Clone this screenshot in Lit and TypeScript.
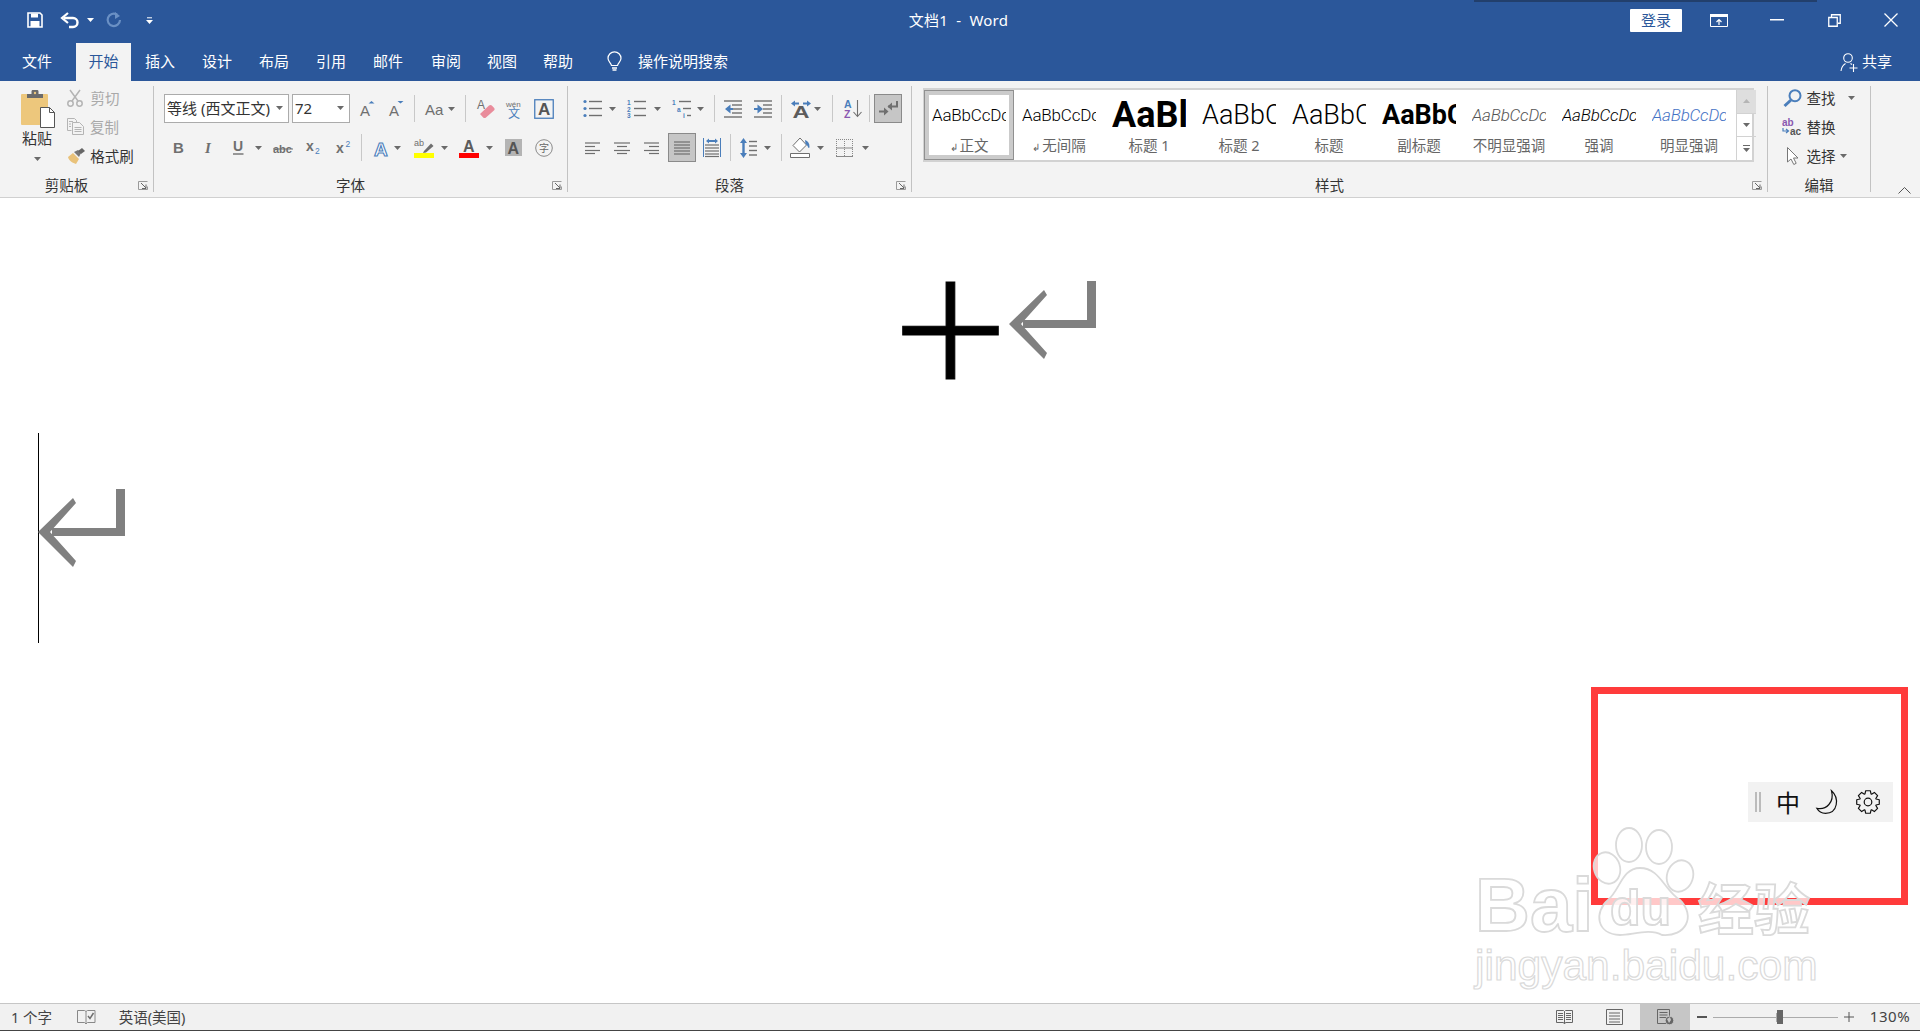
import { LitElement, html, css, svg } from "lit";
import { customElement } from "lit/decorators.js";

const G = "#6f6f6f";
const B = "#4a7ebb";
const CJK = '"Noto Sans CJK SC","Noto Sans",sans-serif';
const SANS = '"Liberation Sans",sans-serif';

const ic = (w: number, h: number, body: unknown) =>
  html`<svg width=${w} height=${h} viewBox="0 0 ${w} ${h}" fill="none">${body}</svg>`;

const t = (x: number, y: number, size: number, fill: string, s: string, weight = "700", family = SANS, italic = false) =>
  svg`<text x=${x} y=${y} font-size=${size} fill=${fill} font-weight=${weight} font-family=${family} font-style=${italic ? "italic" : "normal"}>${s}</text>`;

const lines = (x: number, w: number, ys: number[], c = G, sw = 1.4) =>
  ys.map((y) => svg`<path d="M${x} ${y}h${w}" stroke=${c} stroke-width=${sw}/>`);

type Item = [number, number, unknown];
const row = (origin: number, items: Item[], cls = "") => {
  let cur = origin;
  return html`<div class="row ${cls}">
    ${items.map(([x, w, c]) => {
      const m = x - cur;
      cur = x + w;
      return html`<span class="slot" style="margin-left:${m}px;width:${w}px">${c}</span>`;
    })}
  </div>`;
};

const caret = (c = "#6a6a6a") => ic(7, 4, svg`<path d="M0 0h7L3.5 4z" fill=${c}/>`);
const sep = html`<i class="sep"></i>`;
const launcher = ic(
  10,
  9,
  svg`<path d="M.5 8.5v-8h9" stroke="#9a9a9a"/><path d="M3 2l5 5M8 3.5V7.5H4" stroke="#666"/><path d="M.5 8.5h9v-3" stroke="#9a9a9a"/>`
);

/* ---- quick access & window icons ---- */
const save = ic(
  16,
  16,
  svg`<path d="M1 1h12l2 2v12H1z" stroke="#fff" stroke-width="1.6"/><path d="M4 1.5h7v4H4z" fill="#fff"/><path d="M3.5 9h9v6h-9z" fill="#fff"/>`
);
const undo = ic(
  19,
  15,
  svg`<path d="M3 5h9a4.5 4.5 0 0 1 0 9H8" stroke="#fff" stroke-width="2.4"/><path d="M7 0L1 5l6 5" stroke="#fff" stroke-width="2.2"/>`
);
const redo = ic(
  16,
  16,
  svg`<path d="M11 2.5A6.2 6.2 0 1 0 14 8" stroke="#6a90c4" stroke-width="2.2"/><path d="M9 0v7l5-3z" fill="#6a90c4"/>`
);
const qatMore = ic(7, 7, svg`<path d="M1 .8h5" stroke="#fff"/><path d="M0 3h7L3.5 7z" fill="#fff"/>`);
const bulb = ic(
  15,
  20,
  svg`<path d="M4.5 13.5C3.5 10.5 1 9.5 1 6.3a6.5 6.5 0 0 1 13 0c0 3.2-2.5 4.2-3.5 7.2z" stroke="#fff" stroke-width="1.2"/><path d="M5 16h5M5.5 18h4" stroke="#fff" stroke-width="1.4"/>`
);
const ribbonOpt = ic(
  18,
  13,
  svg`<path d="M.5.5h17v12H.5z" stroke="#fff"/><path d="M0 0h18v3H0z" fill="#fff"/><path d="M9 11V5.5M6.5 8L9 5.5 11.5 8" stroke="#fff" stroke-width="1.2"/>`
);
const minimize = ic(14, 2, svg`<path d="M0 0h14v1.5H0z" fill="#fff"/>`);
const restore = ic(
  13,
  13,
  svg`<path d="M.75 3.5h8.5v8.75H.75z" stroke="#fff" stroke-width="1.3"/><path d="M3.5 3V.75h8.75v8.5H10" stroke="#fff" stroke-width="1.3"/>`
);
const closeX = ic(14, 14, svg`<path d="M.5.5l13 13M13.5.5l-13 13" stroke="#fff" stroke-width="1.3"/>`);
const share = ic(
  18,
  19,
  svg`<circle cx="8" cy="5" r="4.3" stroke="#fff" stroke-width="1.1"/><path d="M1 18c.5-4 2-6 4.5-7.5M10.5 10.5l1.5 1M9.5 15h8M13.5 11v8" stroke="#fff" stroke-width="1.1"/>`
);

/* ---- clipboard ---- */
const paste = ic(
  34,
  38,
  svg`<rect x="0" y="4" width="27" height="31" rx="1" fill="#edc77c"/>
  <path d="M6 4h4.5V1.5C10.5.5 11 0 12 0h4c1 0 1.5.5 1.5 1.5V4H22v4H6z" fill="#6b6b6b"/>
  <circle cx="14" cy="3" r="1.2" fill="#edc77c"/>
  <path d="M19.5 17.5h9l5 5v15h-14z" fill="#fff" stroke="#555"/><path d="M28.5 17.5v5h5" stroke="#555"/>`
);
const cut = ic(
  16,
  18,
  svg`<g stroke="#b4b4b4" stroke-width="1.5"><circle cx="3.5" cy="14.5" r="2.7"/><circle cx="12.5" cy="14.5" r="2.7"/><path d="M5 12L13 1M11 12L3 1"/></g>`
);
const copy = ic(
  17,
  17,
  svg`<g stroke="#b4b4b4"><path d="M.5.5h7l2 2v3M.5.5v12h4"/><path d="M5.5 4.5h7l4 4v8h-11z" fill="#f3f3f3"/><path d="M7.5 9.5h7M7.5 11.5h7M7.5 13.5h7M2 3.5h4M2 6h2M2 8.5h2"/></g>`
);
const painter = ic(
  17,
  16,
  svg`<path d="M0 9l5-4 6 6-3 5C5 15 1 13 0 9z" fill="#e9c27a"/><path d="M6 4l4-2 3 3-2 4z" fill="#777"/><path d="M10 3l4-3 3 3-4 3z" fill="#666"/>`
);

/* ---- font ---- */
const grow = ic(
  15,
  16,
  svg`${t(0, 15, 15, G, "A", "400")}<path d="M8.5 2.5L11.5 0l3 2.5z" fill=${B}/>`
);
const shrink = ic(
  15,
  16,
  svg`${t(0, 15, 15, G, "A", "400")}<path d="M8.5 0h6l-3 2.5z" fill=${B}/>`
);
const aa = ic(18, 14, t(0, 13, 15, G, "Aa", "400"));
const eraser = ic(
  18,
  20,
  svg`${t(0, 10, 12, G, "A", "400")}<path d="M3 15L12 6.5c1-.8 2-.8 2.8 0l2.4 2.4c.6.8.6 1.8-.3 2.6L9 18.5c-.9.8-2 .8-2.8 0L3 15z" fill="#e98c9b"/>`
);
const phonetic = ic(
  16,
  18,
  svg`${t(0, 6.5, 8, G, "wén", "400")}${t(2, 17.5, 12, B, "文", "400", CJK)}`
);
const charBorder = ic(
  20,
  20,
  svg`<rect x=".75" y=".75" width="18.5" height="18.5" stroke=${B} stroke-width="1.3"/>${t(4, 16, 17, "#555", "A")}`
);
const boldI = ic(10, 13, t(0, 12, 15, G, "B"));
const italicI = ic(10, 13, t(1, 12, 15, G, "I", "700", '"Liberation Serif",serif', true));
const under = ic(
  11,
  15,
  svg`${t(0, 11, 14, G, "U")}<path d="M0 14h10.5" stroke=${G} stroke-width="1.4"/>`
);
const abc = ic(20, 12, svg`${t(0, 11, 11, G, "abc")}<path d="M0 7h20" stroke=${G}/>`);
const sub = ic(
  15,
  15,
  svg`${t(0, 11, 14, G, "x")}${t(9, 14, 8.5, B, "2", "400")}`
);
const sup = ic(
  15,
  15,
  svg`${t(0, 13, 14, G, "x")}${t(9.5, 7, 8.5, B, "2", "400")}`
);
const effect = ic(
  16,
  18,
  svg`<text x="1" y="16.5" font-size="19" font-weight="700" font-family=${SANS} fill="#fff" stroke=${B} stroke-width="1.1">A</text>`
);
const hilite = ic(
  20,
  20,
  svg`${t(0, 8, 9, G, "ab", "400")}<path d="M10 13L17 5.5l2.5 2.5L12 14.5l-3 .5z" fill=${G}/><path d="M0 15h20v5H0z" fill="#ffff00"/>`
);
const fontColor = ic(
  20,
  20,
  svg`${t(4, 13.5, 16, "#5c5c5c", "A")}<path d="M0 15h20v5H0z" fill="#ff0000"/>`
);
const shadeA = ic(
  17,
  17,
  svg`<path d="M0 0h17v17H0z" fill="#b4b4b4"/>${t(2.5, 15, 16, "#555", "A")}`
);
const circled = ic(
  18,
  18,
  svg`<circle cx="9" cy="9" r="8.3" stroke="#8a8a8a"/>${t(4, 13, 10, "#666", "字", "400", CJK)}`
);

/* ---- paragraph ---- */
const bullets = ic(
  19,
  19,
  svg`<g fill=${B}><circle cx="2" cy="2.5" r="1.6"/><circle cx="2" cy="9.5" r="1.6"/><circle cx="2" cy="16.5" r="1.6"/></g>${lines(6, 13, [2.5, 9.5, 16.5])}`
);
const numbers = ic(
  19,
  19,
  svg`${t(0, 5.5, 6.5, B, "1")}${t(0, 12.5, 6.5, B, "2")}${t(0, 19, 6.5, B, "3")}${lines(7, 12, [2.5, 9.5, 16.5])}`
);
const multi = ic(
  19,
  19,
  svg`${t(0, 5.5, 6.5, B, "1")}${t(5, 12.5, 6.5, B, "a")}${t(11, 19, 6.5, B, "i")}${lines(7, 12, [2.5])}${lines(11, 8, [9.5])}${lines(15, 4, [16.5])}`
);
const outdent = ic(
  18,
  18,
  svg`${lines(0, 18, [1, 17])}${lines(8, 10, [5, 9, 13])}<path d="M1 9l5.5-4.5V8H9v2H6.5v3.5z" fill=${B}/>`
);
const indent = ic(
  18,
  18,
  svg`${lines(0, 18, [1, 17])}${lines(9, 9, [5, 9, 13])}<path d="M9 9L3.5 4.5V8H0v2h3.5v3.5z" fill=${B}/>`
);
const direction = ic(
  20,
  18,
  svg`<text x="1.5" y="18" font-size="16" font-weight="700" font-family=${SANS} fill="#5c5c5c" textLength="17" lengthAdjust="spacingAndGlyphs">A</text><path d="M0 3.5l4-3v2h4v2H4v2zM20 3.5l-4-3v2h-4v2h4v2z" fill=${B}/>`
);
const sort = ic(
  18,
  19,
  svg`${t(0, 9, 10.5, B, "A")}${t(0, 19, 10.5, "#8a58b0", "Z")}<path d="M13.5 1v16M9.5 13l4 4.5 4-4.5" stroke=${G} stroke-width="1.1"/>`
);
const pilcrow = ic(
  20,
  17,
  svg`<path d="M19 1v5.5H10" stroke=${G} stroke-width="2"/><path d="M14 2.5L9.5 6.5l4.5 4z" fill=${G}/><path d="M1 11.5h8" stroke=${G} stroke-width="2"/><path d="M6 7.5l4.5 4-4.5 4z" fill=${G}/>`
);
const alignL = ic(15, 12, lines(0, 15, [1, 8.5], G, 1.2).concat(lines(0, 10, [4.5, 11.5], G, 1.2)));
const alignC = ic(16, 12, lines(0, 16, [1, 8.5], G, 1.2).concat(lines(3, 10, [4.5, 11.5], G, 1.2)));
const alignR = ic(15, 12, lines(0, 15, [1, 8.5], G, 1.2).concat(lines(5, 10, [4.5, 11.5], G, 1.2)));
const justify = ic(16, 14, lines(0, 16, [1, 4, 7, 10, 13], G, 1.2));
const distribute = ic(
  18,
  19,
  svg`<path d="M.5 0v19M17.5 0v19" stroke=${B}/>${lines(2, 14, [7, 10, 13, 16, 18.5], G, 1.2)}<path d="M3 3l3-2.5V2h6V.5L15 3l-3 2.5V4H6v1.5z" fill=${B}/>`
);
const spacing = ic(
  17,
  20,
  svg`<path d="M3.5 0L7 5H4.7v10H7L3.5 20 0 15h2.3V5H0z" fill=${B}/>${lines(9, 8, [3.5, 8, 12.5, 17])}`
);
const bucket = ic(
  20,
  20,
  svg`<path d="M10 0l6.5 7-7 7L3 7.5z" fill="#fff" stroke=${G}/><path d="M15 2c3 1 4.5 3 4.5 7 0 1-1 1.5-1.5 0-.3-1-1-2-2.5-3z" fill=${B}/><path d="M.5 15.5h19v4H.5z" fill="#fff" stroke=${G}/>`
);
const borders = ic(
  17,
  18,
  svg`<g stroke="#888" stroke-dasharray="1 1"><path d="M.5 0v18M16.5 0v18M0 .5h17M8.5 0v18"/></g><path d="M0 9h17M0 17.5h17" stroke="#888"/>`
);

/* ---- editing ---- */
const find = ic(
  19,
  18,
  svg`<circle cx="12" cy="6.7" r="5.5" stroke=${B} stroke-width="2"/><path d="M8 11L1.5 17" stroke=${B} stroke-width="3"/>`
);
const replace = ic(
  20,
  17,
  svg`${t(0, 8, 10, "#8a58b0", "ab", "700")}${t(8, 16.5, 10, "#555", "ac", "700")}<path d="M1 10v3h5M4 11l2.5 2L4 15" stroke=${B} stroke-width="1.2"/>`
);
const pointer = ic(
  12,
  18,
  svg`<path d="M.5.5v14.5l3.5-3 2.8 5.5 2.4-1.2-2.7-5.3h4.500z" fill="#fff" stroke="#777"/>`
);

/* ---- status bar ---- */
const proof = ic(
  18,
  15,
  svg`<path d="M.5.5h7l1.5 1 1.5-1h7.5v12h-7.5l-1.5 1.5-1.5-1.5h-7zM9 1.5v12" stroke="#888"/><path d="M11 6l2 2.5L16.5 3" stroke=${G} stroke-width="1.5"/>`
);
const readMode = ic(
  17,
  15,
  svg`<path d="M.5.5h7l1 1 1-1h7v12h-7l-1 1.5-1-1.5h-7zM8.500 1.5v12" stroke="#666"/>${lines(2, 5, [3.5, 5.5, 7.5, 9.5], "#666", 1)}${lines(10, 5, [3.5, 5.5, 7.5, 9.5], "#666", 1)}`
);
const printMode = ic(
  17,
  16,
  svg`<path d="M.5.5h16v15H.5z" stroke="#666"/>${lines(3, 11, [4, 7, 10, 13], "#666", 1)}`
);
const webMode = ic(
  17,
  16,
  svg`<path d="M.5.5h12v14H.5z" stroke="#666"/>${lines(2.5, 8, [3.5, 6, 8.5], "#666", 1)}<circle cx="12.5" cy="11.5" r="4.3" fill="#666" stroke="#c6c6c6"/><path d="M10 10l3-2 1 3-2 3z" fill="#c6c6c6"/>`
);

/* ---- overlay gear ---- */
const gearPath = (() => {
  const n = 8;
  const cx = 12;
  const cy = 12;
  let d = "";
  for (let i = 0; i < n; i++) {
    const a = (i * 2 * Math.PI) / n;
    const p = (da: number, r: number) =>
      `${(cx + r * Math.cos(a + da)).toFixed(2)} ${(cy + r * Math.sin(a + da)).toFixed(2)}`;
    d += `${i === 0 ? "M" : "L"}${p(-0.36, 8.6)} L${p(-0.2, 11.5)} L${p(0.2, 11.5)} L${p(0.36, 8.6)} `;
  }
  return d + "Z";
})();
const gear = ic(
  24,
  24,
  svg`<path d=${gearPath} stroke="#111" stroke-width="1.2" stroke-linejoin="round"/><circle cx="12" cy="12" r="3.8" stroke="#111" stroke-width="1.2"/>`
);
const moon = ic(
  24,
  24,
  svg`<path d="M15.5.8C23.5 8 22 23.3 9.5 23.3 5.5 23.3 2.5 21.3.8 18.3 10.5 20.3 18.5 12 15.5.8z" stroke="#111" stroke-width="1.2"/>`
);

const returnMark = ic(
  87,
  78,
  svg`<path d="M78 0h9v47H14V39H78z" fill="#808080"/><path d="M35 9L38 14 12 43 38 72 35 78 0 43z" fill="#808080"/>`
);

const styleItems: { s: string; label: string; cls: string; mark?: boolean; sel?: boolean }[] = [
  { s: "AaBbCcDc", label: "正文", cls: "base", mark: true, sel: true },
  { s: "AaBbCcDc", label: "无间隔", cls: "base", mark: true },
  { s: "AaBl", label: "标题 1", cls: "h1" },
  { s: "AaBbC", label: "标题 2", cls: "h2" },
  { s: "AaBbC", label: "标题", cls: "h2" },
  { s: "AaBbC", label: "副标题", cls: "h2 b" },
  { s: "AaBbCcDc", label: "不明显强调", cls: "base i gray" },
  { s: "AaBbCcDc", label: "强调", cls: "base i" },
  { s: "AaBbCcDc", label: "明显强调", cls: "base i blue" },
];

@customElement("app-root")
export class AppRoot extends LitElement {
  static styles = css`
    :host {
      display: block;
      font-family: "Noto Sans", "Noto Sans CJK SC", sans-serif;
      color: #333;
    }
    .page {
      position: relative;
      width: 1920px;
      height: 1031px;
      overflow: hidden;
      display: flex;
      flex-direction: column;
      background: #fff;
    }
    svg {
      display: block;
      flex: none;
      overflow: visible;
    }
    .row {
      display: flex;
      align-items: center;
    }
    .slot {
      flex: none;
      display: flex;
      align-items: center;
      justify-content: center;
      white-space: nowrap;
    }
    .sep {
      display: block;
      width: 1px;
      height: 27px;
      background: #c8c8c8;
    }
    .title {
      height: 43px;
      background: #2b579a;
      color: #fff;
      position: relative;
    }
    .title .row {
      height: 40px;
    }
    .title-text {
      font-size: 15px;
      white-space: pre;
      color: #fff;
      letter-spacing: 0.2px;
      padding-bottom: 2px;
    }
    .login {
      display: flex;
      align-items: center;
      justify-content: center;
      width: 52px;
      height: 23px;
      box-sizing: border-box;
      padding-bottom: 2px;
      background: #fff;
      border-radius: 1px;
      color: #2b579a;
      font-size: 15px;
    }
    .shadow {
      position: absolute;
      left: 1474px;
      top: 0;
      width: 343px;
      height: 2px;
      background: #223f6c;
      filter: blur(0.6px);
    }
    .tabs {
      height: 38px;
      background: #2b579a;
    }
    .tabs .row {
      height: 38px;
      align-items: stretch;
    }
    .tab {
      font-size: 15px;
      color: #fff;
      display: flex;
      align-items: center;
      justify-content: center;
      width: 100%;
      padding-bottom: 3px;
      box-sizing: border-box;
    }
    .tabs .slot {
      align-items: stretch;
    }
    .tabs .slot svg {
      align-self: center;
    }
    .tab.on {
      background: #f3f3f3;
      color: #2b579a;
    }
    .tab.search {
      justify-content: flex-start;
    }
    .ribbon {
      height: 111px;
      background: #f3f3f3;
      border-bottom: 1px solid #d0d0d0;
      display: flex;
      padding-top: 5px;
      box-sizing: content-box;
    }
    .collapse {
      align-self: flex-end;
      padding-bottom: 3px;
    }
    .group {
      flex: none;
      height: 106px;
      box-sizing: border-box;
      border-right: 1px solid #c2c2c2;
      display: flex;
      flex-direction: column;
      font-size: 14.5px;
    }
    .g1 {
      width: 154px;
    }
    .g2 {
      width: 414px;
    }
    .g3 {
      width: 344px;
    }
    .g4 {
      width: 856px;
    }
    .g5 {
      width: 103px;
    }
    .rows {
      flex: none;
      height: 92px;
      padding-top: 8px;
      box-sizing: border-box;
      display: flex;
      flex-direction: column;
      gap: 10px;
    }
    .rows.flat {
      padding-top: 0;
    }
    .rows .row {
      height: 29px;
    }
    .glabel {
      flex: 1;
      display: flex;
      align-items: center;
      font-size: 14.5px;
      line-height: 14px;
      color: #333;
    }
    .glabel b {
      flex: 1;
      font-weight: 400;
      text-align: center;
    }
    .glabel i {
      flex: none;
      width: 20px;
      display: flex;
      justify-content: center;
      padding-top: 1px;
      box-sizing: border-box;
    }
    .combo {
      width: 100%;
      height: 29px;
      box-sizing: border-box;
      background: #fff;
      border: 1px solid #ababab;
      display: flex;
      align-items: center;
      padding: 0 5px 2px 2px;
      font-size: 15px;
      color: #333;
      justify-content: space-between;
    }
    .on-box {
      width: 100%;
      height: 29px;
      box-sizing: border-box;
      background: #c6c6c6;
      border: 1.5px solid #8a8a8a;
      display: flex;
      align-items: center;
      justify-content: center;
    }
    .clip {
      flex: none;
      height: 92px;
      display: flex;
    }
    .paste {
      flex: none;
      width: 67px;
      padding: 4px 0 0 21px;
      box-sizing: border-box;
      display: flex;
      flex-direction: column;
      align-items: flex-start;
    }
    .paste-inner {
      width: 32px;
      display: flex;
      flex-direction: column;
      align-items: center;
    }
    .paste-icon {
      display: flex;
      width: 34px;
      margin-left: 2px;
    }
    .paste-text {
      font-size: 15px;
      line-height: 20px;
      white-space: nowrap;
    }
    .paste-caret {
      margin-top: 9px;
    }
    .stack {
      flex: none;
      display: flex;
      flex-direction: column;
      margin-top: -3px;
    }
    .stack .row {
      height: 29px;
    }
    .dim {
      color: #a9a9a9;
    }
    .gallery {
      margin: 2px 0 0 11px;
      width: 831px;
      height: 74px;
      box-sizing: border-box;
      border: 2px solid #d2d2d2;
      background: #fff;
      display: flex;
    }
    .items {
      display: grid;
      grid-template-columns: repeat(9, 90px);
      flex: none;
      margin-left: -1px;
      width: 810px;
    }
    .item {
      height: 70px;
      box-sizing: border-box;
      padding-top: 3px;
      display: flex;
      flex-direction: column;
      align-items: center;
    }
    .item.sel {
      box-shadow: inset 0 0 0 1px #909090, inset 0 0 0 5px #cbcbcb;
    }
    .sample {
      height: 44px;
      width: 74px;
      display: flex;
      align-items: center;
      white-space: nowrap;
      overflow: hidden;
      font-family: "Roboto", "Liberation Sans", sans-serif;
      font-weight: 300;
      color: #000;
    }
    .sample.base {
      font-size: 17px;
      letter-spacing: -0.2px;
    }
    .sample.h1 {
      font-size: 36px;
      font-weight: 700;
    }
    .sample.h2 {
      font-size: 27px;
    }
    .sample.b {
      font-weight: 700;
    }
    .sample.i {
      font-style: italic;
    }
    .sample.gray {
      color: #555;
    }
    .sample.blue {
      color: #4472c4;
    }
    .slabel {
      font-size: 14.5px;
      line-height: 16px;
      color: #666;
      white-space: nowrap;
    }
    .slabel span {
      font-size: 10px;
      margin-right: 2px;
    }
    .scroll {
      flex: none;
      width: 19px;
      display: flex;
      flex-direction: column;
      margin-left: 2px;
      border-left: 1px solid #d2d2d2;
    }
    .scroll span {
      flex: 1;
      display: flex;
      align-items: center;
      justify-content: center;
      border-bottom: 1px solid #d2d2d2;
    }
    .scroll span.top {
      background: #dedede;
    }
    .scroll span:last-child {
      border-bottom: none;
    }
    .doc {
      flex: 1;
      display: flex;
      flex-direction: column;
      align-items: flex-start;
    }
    .line1 {
      margin-top: 83px;
      padding-left: 903px;
      height: 98px;
      display: flex;
      gap: 11px;
    }
    .plus {
      width: 95px;
      height: 98px;
      box-sizing: border-box;
      padding-bottom: 12px;
      display: flex;
      align-items: center;
      justify-content: center;
      font-family: "Open Sans", sans-serif;
      font-weight: 300;
      font-size: 206px;
      line-height: 86px;
      color: #000;
      -webkit-text-stroke: 1px #000;
    }
    .line2 {
      margin: 54px 0 0 38px;
      height: 210px;
      border-left: 1px solid #000;
      padding-top: 56px;
      box-sizing: border-box;
    }
    .line2 svg {
      margin-left: -1px;
    }
    .status {
      height: 28px;
      box-sizing: border-box;
      background: #f1f1f1;
      border-top: 1px solid #c6c6c6;
      border-bottom: 1px solid #444;
      font-size: 14.5px;
      color: #444;
    }
    .status .row {
      height: 26px;
      align-items: stretch;
    }
    .status .text {
      padding-bottom: 2px;
      white-space: nowrap;
    }
    .hl {
      width: 100%;
      height: 100%;
      background: #c6c6c6;
      display: flex;
      align-items: center;
      justify-content: center;
    }
    .track {
      width: 100%;
      height: 1px;
      background: #ababab;
    }
    .minus {
      width: 100%;
      height: 1.5px;
      background: #555;
    }
    .thumb {
      width: 6px;
      height: 14px;
      background: #666;
    }
    .tick {
      width: 1px;
      height: 9px;
      background: #ababab;
    }
    .pct {
      font-size: 15px;
      letter-spacing: 0.6px;
      color: #444;
      padding-bottom: 2px;
    }
    .redbox {
      position: absolute;
      left: 1591px;
      top: 687px;
      width: 317px;
      height: 218px;
      box-sizing: border-box;
      border: 7px solid #ff3b3b;
    }
    .ime {
      position: absolute;
      left: 1748px;
      top: 782px;
      width: 145px;
      height: 40px;
      background: #f2f2f2;
    }
    .ime .row {
      height: 40px;
    }
    .grip {
      width: 6px;
      height: 20px;
      box-sizing: border-box;
      border-left: 2px solid #bbb;
      border-right: 2px solid #bbb;
    }
    .zh {
      font-family: "Noto Sans CJK SC", sans-serif;
      font-size: 24px;
      color: #111;
      line-height: 30px;
    }
    .wm {
      position: absolute;
      color: rgba(255, 255, 255, 0.72);
      -webkit-text-stroke: 1.8px #dadada;
      white-space: nowrap;
      pointer-events: none;
    }
    .wm1 {
      left: 1475px;
      top: 861px;
      font: 700 76px/88px "Liberation Sans", sans-serif;
    }
    .wm2 {
      left: 1610px;
      top: 879px;
      font: 700 50px/58px "Liberation Sans", sans-serif;
    }
    .wm3 {
      left: 1698px;
      top: 866px;
      font: 700 56px/80px "Noto Sans CJK SC", sans-serif;
    }
    .wm4 {
      left: 1475px;
      top: 941px;
      font: 400 42.5px/50px "Liberation Sans", sans-serif;
      -webkit-text-stroke: 1.2px #dadada;
    }
    .paw {
      position: absolute;
      left: 1590px;
      top: 830px;
      pointer-events: none;
    }
  `;

  private tabs: [string, number, number][] = [
    ["文件", 22, 30],
    ["开始", 76, 55],
    ["插入", 145, 30],
    ["设计", 202, 30],
    ["布局", 259, 30],
    ["引用", 316, 30],
    ["邮件", 373, 30],
    ["审阅", 431, 30],
    ["视图", 487, 30],
    ["帮助", 543, 30],
  ];

  render() {
    const tabItems: Item[] = this.tabs.map(([s, x, w]) => [
      x,
      w,
      html`<span class="tab ${s === "开始" ? "on" : ""}">${s}</span>`,
    ]);
    return html`
      <div class="page">
        <div class="title">
          ${row(0, [
            [27, 16, save],
            [61, 19, undo],
            [87, 7, caret("#fff")],
            [106, 16, redo],
            [146, 7, qatMore],
            [908, 101, html`<span class="title-text">文档1  -  Word</span>`],
            [1630, 52, html`<span class="login">登录</span>`],
            [1710, 18, ribbonOpt],
            [1770, 14, minimize],
            [1828, 13, restore],
            [1884, 14, closeX],
          ])}
          <div class="shadow"></div>
        </div>
        <div class="tabs">
          ${row(0, [
            ...tabItems,
            [607, 15, bulb],
            [638, 90, html`<span class="tab search">操作说明搜索</span>`],
            [1840, 18, share],
            [1862, 30, html`<span class="tab">共享</span>`],
          ])}
        </div>
        <div class="ribbon">
          ${this.clipboard()} ${this.font()} ${this.para()} ${this.styles_()} ${this.editing()}
          ${row(0, [[27, 13, ic(13, 7, svg`<path d="M.5 6.5L6.5.5l6 6" stroke="#555"/>`)]], "collapse")}
        </div>
        <div class="doc">
          <div class="line1"><span class="plus">+</span>${returnMark}</div>
          <div class="line2">${returnMark}</div>
        </div>
        <div class="status">
          ${row(0, [
            [11, 41, html`<span class="text">1 个字</span>`],
            [77, 18, proof],
            [117, 70, html`<span class="text">英语(美国)</span>`],
            [1556, 17, readMode],
            [1606, 17, printMode],
            [1640, 50, html`<span class="hl">${webMode}</span>`],
            [1697, 10, html`<span class="minus"></span>`],
            [1713, 63, html`<span class="track"></span>`],
            [1776, 1, html`<span class="tick"></span>`],
            [1777, 6, html`<span class="thumb"></span>`],
            [1783, 55, html`<span class="track"></span>`],
            [1844, 10, ic(10, 10, svg`<path d="M0 5h10M5 0v10" stroke="#555"/>`)],
            [1871, 38, html`<span class="pct">130%</span>`],
          ])}
        </div>
        <div class="redbox"></div>
        <div class="ime">
          ${row(1748, [
            [1755, 6, html`<i class="grip"></i>`],
            [1776, 24, html`<span class="zh">中</span>`],
            [1816, 24, moon],
            [1856, 24, gear],
          ])}
        </div>
        <svg class="paw" width="110" height="110" viewBox="1590 830 110 110">
          <g fill="rgba(255,255,255,.72)" stroke="#dadada" stroke-width="1.8">
            <ellipse cx="1607" cy="868" rx="13" ry="16" transform="rotate(-18 1607 868)" />
            <ellipse cx="1629" cy="845" rx="13" ry="17" />
            <ellipse cx="1659" cy="847" rx="13" ry="17" />
            <ellipse cx="1680" cy="876" rx="13" ry="16" transform="rotate(18 1680 876)" />
            <path
              d="M1640 868C1622 868 1620 890 1608 900C1594 912 1596 934 1620 935C1632 935 1650 928 1662 935C1686 937 1696 916 1680 900C1664 890 1660 868 1640 868Z"
            />
          </g>
        </svg>
        <span class="wm wm1">Bai</span>
        <span class="wm wm2">du</span>
        <span class="wm wm3">经验</span>
        <span class="wm wm4">jingyan.baidu.com</span>
      </div>
    `;
  }

  private clipboard() {
    return html`<section class="group g1">
      <div class="clip">
        <div class="paste">
          <div class="paste-inner">
            <span class="paste-icon">${paste}</span>
            <span class="paste-text">粘贴</span>
            <span class="paste-caret">${caret()}</span>
          </div>
        </div>
        <div class="stack">
          ${row(67, [
            [67, 16, cut],
            [91, 28, html`<span class="dim">剪切</span>`],
          ])}
          ${row(67, [
            [67, 17, copy],
            [90, 29, html`<span class="dim">复制</span>`],
          ])}
          ${row(67, [
            [68, 17, painter],
            [90, 44, html`<span>格式刷</span>`],
          ])}
        </div>
      </div>
      <div class="glabel"><b>剪贴板</b><i>${launcher}</i></div>
    </section>`;
  }

  private font() {
    const o = 154;
    return html`<section class="group g2">
      <div class="rows">
        ${row(o, [
          [164, 125, html`<span class="combo">等线 (西文正文)${caret()}</span>`],
          [292, 58, html`<span class="combo">72${caret()}</span>`],
          [360, 15, grow],
          [389, 15, shrink],
          [414, 1, sep],
          [425, 18, aa],
          [448, 7, caret()],
          [465, 1, sep],
          [477, 18, eraser],
          [506, 16, phonetic],
          [534, 20, charBorder],
        ])}
        ${row(o, [
          [173, 10, boldI],
          [204, 10, italicI],
          [233, 11, under],
          [255, 7, caret()],
          [273, 20, abc],
          [306, 15, sub],
          [336, 15, sup],
          [361, 1, sep],
          [373, 16, effect],
          [394, 7, caret()],
          [414, 20, hilite],
          [441, 7, caret()],
          [459, 20, fontColor],
          [486, 7, caret()],
          [505, 17, shadeA],
          [535, 18, circled],
        ])}
      </div>
      <div class="glabel"><b>字体</b><i>${launcher}</i></div>
    </section>`;
  }

  private para() {
    const o = 568;
    return html`<section class="group g3">
      <div class="rows">
        ${row(o, [
          [583, 19, bullets],
          [609, 7, caret()],
          [627, 19, numbers],
          [654, 7, caret()],
          [672, 19, multi],
          [697, 7, caret()],
          [714, 1, sep],
          [724, 18, outdent],
          [754, 18, indent],
          [781, 1, sep],
          [791, 20, direction],
          [814, 7, caret()],
          [832, 1, sep],
          [844, 18, sort],
          [869, 1, sep],
          [874, 28, html`<span class="on-box">${pilcrow}</span>`],
        ])}
        ${row(o, [
          [585, 15, alignL],
          [614, 16, alignC],
          [644, 15, alignR],
          [668, 28, html`<span class="on-box">${justify}</span>`],
          [703, 18, distribute],
          [730, 1, sep],
          [740, 17, spacing],
          [764, 7, caret()],
          [781, 1, sep],
          [790, 20, bucket],
          [817, 7, caret()],
          [836, 17, borders],
          [862, 7, caret()],
        ])}
      </div>
      <div class="glabel"><b>段落</b><i>${launcher}</i></div>
    </section>`;
  }

  private styles_() {
    return html`<section class="group g4">
      <div class="rows flat">
        <div class="gallery">
          <div class="items">
            ${styleItems.map(
              (it) => html`<div class="item ${it.sel ? "sel" : ""}">
                <div class="sample ${it.cls}">${it.s}</div>
                <div class="slabel">${it.mark ? html`<span>↲</span>` : ""}${it.label}</div>
              </div>`
            )}
          </div>
          <div class="scroll">
            <span class="top">${ic(7, 4, svg`<path d="M3.5 0L7 4H0z" fill="#b5b5b5"/>`)}</span>
            <span>${caret()}</span>
            <span>${ic(7, 7, svg`<path d="M0 .5h7" stroke="#6a6a6a"/><path d="M0 3h7L3.5 7z" fill="#6a6a6a"/>`)}</span>
          </div>
        </div>
      </div>
      <div class="glabel"><b>样式</b><i>${launcher}</i></div>
    </section>`;
  }

  private editing() {
    const o = 1768;
    return html`<section class="group g5">
      <div class="clip">
        <div class="stack">
          ${row(o, [
            [1783, 19, find],
            [1806, 30, html`<span>查找</span>`],
            [1848, 7, caret()],
          ])}
          ${row(o, [
            [1782, 20, replace],
            [1806, 30, html`<span>替换</span>`],
          ])}
          ${row(o, [
            [1787, 12, pointer],
            [1806, 30, html`<span>选择</span>`],
            [1840, 7, caret()],
          ])}
        </div>
      </div>
      <div class="glabel"><b>编辑</b></div>
    </section>`;
  }
}
